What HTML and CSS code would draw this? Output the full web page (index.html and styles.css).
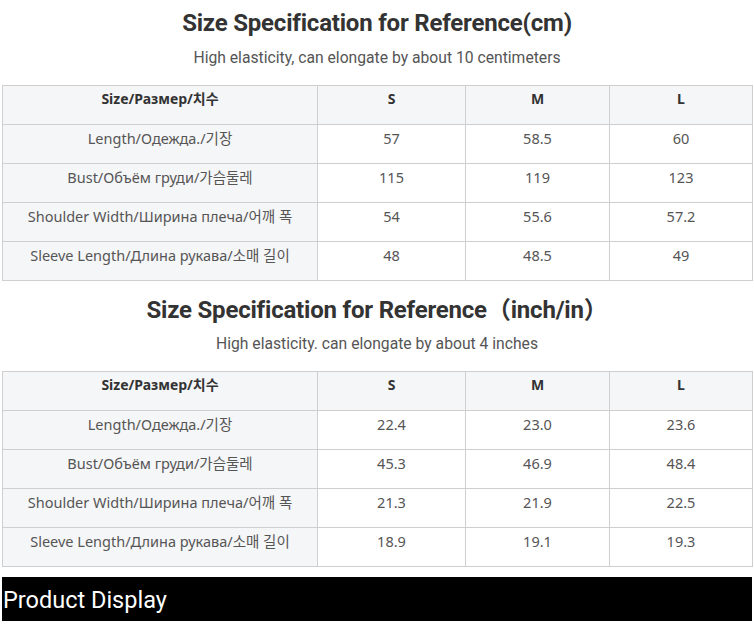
FILE: index.html
```html
<!DOCTYPE html>
<html>
<head>
<meta charset="utf-8">
<link rel="stylesheet" href="styles.css">
</head>
<body>
<div class="page">
  <section class="spec">
    <h2 class="title">Size Specification for Reference(cm)</h2>
    <p class="sub">High elasticity, can elongate by about 10 centimeters</p>
    <table class="tbl">
      <colgroup><col class="c1"><col class="c2"><col class="c3"><col class="c4"></colgroup>
      <tr class="head"><th>Size/Размер/치수</th><th>S</th><th>M</th><th>L</th></tr>
      <tr><td class="lab">Length/Одежда./기장</td><td>57</td><td>58.5</td><td>60</td></tr>
      <tr><td class="lab">Bust/Объём груди/가슴둘레</td><td>115</td><td>119</td><td>123</td></tr>
      <tr><td class="lab">Shoulder Width/Ширина плеча/어깨 폭</td><td>54</td><td>55.6</td><td>57.2</td></tr>
      <tr><td class="lab">Sleeve Length/Длина рукава/소매 길이</td><td>48</td><td>48.5</td><td>49</td></tr>
    </table>
  </section>
  <section class="spec second">
    <h2 class="title">Size Specification for Reference（inch/in）</h2>
    <p class="sub">High elasticity. can elongate by about 4 inches</p>
    <table class="tbl">
      <colgroup><col class="c1"><col class="c2"><col class="c3"><col class="c4"></colgroup>
      <tr class="head"><th>Size/Размер/치수</th><th>S</th><th>M</th><th>L</th></tr>
      <tr><td class="lab">Length/Одежда./기장</td><td>22.4</td><td>23.0</td><td>23.6</td></tr>
      <tr><td class="lab">Bust/Объём груди/가슴둘레</td><td>45.3</td><td>46.9</td><td>48.4</td></tr>
      <tr><td class="lab">Shoulder Width/Ширина плеча/어깨 폭</td><td>21.3</td><td>21.9</td><td>22.5</td></tr>
      <tr><td class="lab">Sleeve Length/Длина рукава/소매 길이</td><td>18.9</td><td>19.1</td><td>19.3</td></tr>
    </table>
  </section>
  <div class="bar">Product Display</div>
</div>
</body>
</html>
```

FILE: styles.css
```css
html, body {
  margin: 0;
  padding: 0;
  background: #fff;
}
.page {
  padding: 7px 2px 0 2px;
}
.title {
  margin: 0;
  font-family: Roboto, "Noto Sans CJK SC", sans-serif;
  font-weight: 700;
  font-size: 24px;
  letter-spacing: -0.2px;
  line-height: 32px;
  color: #333;
  text-align: center;
}
.sub {
  margin: 8px 0 0 0;
  font-family: Roboto, sans-serif;
  font-size: 15.7px;
  line-height: 22px;
  color: #555;
  text-align: center;
}
.tbl {
  margin-top: 16px;
  width: 750px;
  border-collapse: collapse;
  table-layout: fixed;
  font-family: "Noto Sans", "Noto Sans CJK KR", sans-serif;
  font-size: 14.5px;
  color: #555;
}
.c1 { width: 315px; }
.c2 { width: 148px; }
.c3 { width: 144px; }
.c4 { width: 143px; }
.tbl th, .tbl td {
  border: 1px solid #cfcfcf;
  padding: 2px 6px 14px;
  line-height: 22px;
  height: 22px;
  text-align: center;
  vertical-align: top;
  white-space: nowrap;
}
.tbl th {
  font-weight: 700;
  font-size: 14px;
  color: #333;
}
.head th {
  background: #f5f6f8;
}
.tbl td.lab {
  background: #f5f6f8;
}
.second {
  margin-top: 13px;
}
.second .sub {
  margin-top: 7px;
}
.bar {
  margin-top: 10px;
  height: 42px;
  padding: 2px 0 0 1px;
  background: #000;
  color: #fff;
  font-family: Roboto, sans-serif;
  font-size: 23.5px;
  line-height: 42px;
}
```
